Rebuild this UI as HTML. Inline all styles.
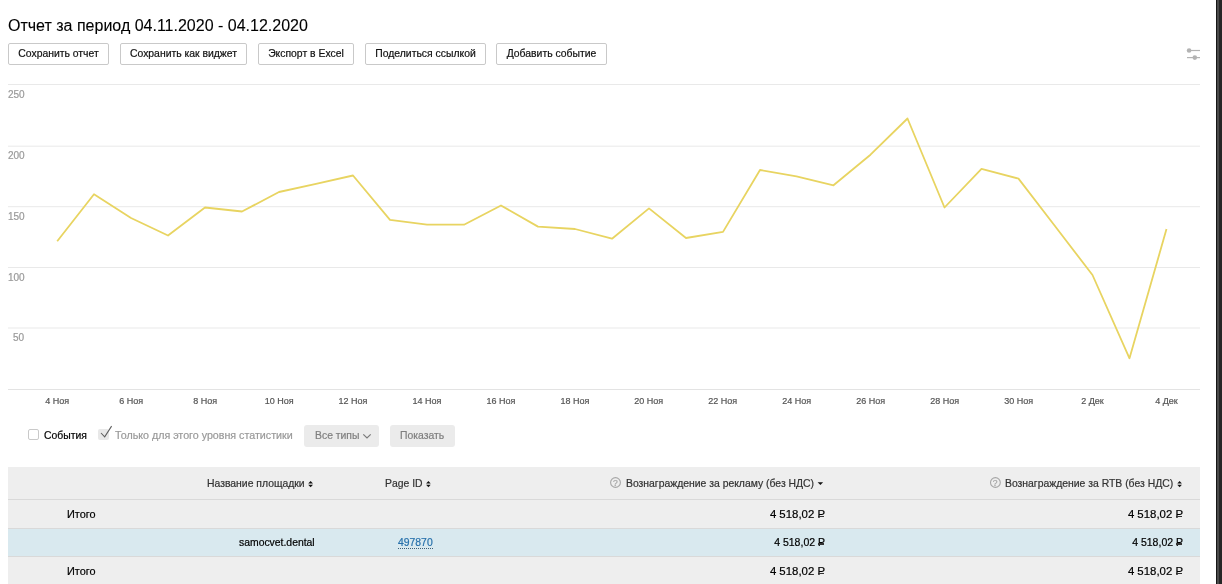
<!DOCTYPE html>
<html><head><meta charset="utf-8">
<style>
*{box-sizing:border-box;margin:0;padding:0}
html,body{width:1222px;height:584px;overflow:hidden;background:#fff}
body{position:relative;font-family:"Liberation Sans",sans-serif;color:#000}
.a{position:absolute;white-space:nowrap}
.t,.btn,.xlab,.ylab{-webkit-text-stroke:0.2px currentColor}
.title{-webkit-text-stroke:0.1px currentColor}
.title{left:8px;top:16px;font-size:16px;line-height:20px;color:#000}
.btn{position:absolute;top:43px;height:22px;border:1px solid #c9c9c9;border-radius:2px;background:#fff;font-size:10.4px;line-height:20px;text-align:center;color:#111}
.ylab{position:absolute;left:8px;font-size:10px;line-height:12px;color:#999}
.xlab{position:absolute;top:396px;font-size:9px;line-height:11px;color:#555;transform:translateX(-50%)}
.rbar{position:absolute;left:1216px;top:0;width:6px;height:584px;background:linear-gradient(to right,#161616 0,#161616 1px,#4a4a4a 1px,#4a4a4a 3.3px,#262626 3.3px)}
.tbl{position:absolute;left:8px;top:467px;width:1192px;height:117px;background:#eeeeee}
.hl{position:absolute;left:0;width:1192px;height:1px;background:#d9d9d9}
.t{position:absolute;font-size:10.4px;line-height:12px;white-space:nowrap;color:#000}
.rub{position:relative;display:inline-block}
.rub:after{content:"";position:absolute;left:0.02em;width:0.58em;top:0.69em;height:1.3px;background:#333}
</style></head>
<body>
<div style="position:absolute;left:0;top:0;width:1222px;height:584px;will-change:transform">
<div class="a title">Отчет за период 04.11.2020 - 04.12.2020</div>

<div class="btn" style="left:8px;width:101px">Сохранить отчет</div>
<div class="btn" style="left:120px;width:127px">Сохранить как виджет</div>
<div class="btn" style="left:258px;width:96px">Экспорт в Excel</div>
<div class="btn" style="left:365px;width:121px">Поделиться ссылкой</div>
<div class="btn" style="left:496px;width:111px">Добавить событие</div>

<svg class="a" style="left:0;top:0" width="1222" height="584" viewBox="0 0 1222 584">
  <g stroke="#b3b3b3" fill="#b3b3b3" stroke-width="1.2">
    <line x1="1187" y1="50.5" x2="1200" y2="50.5"/>
    <circle cx="1189.1" cy="50.5" r="2.3" stroke="none"/>
    <line x1="1187" y1="57.6" x2="1200" y2="57.6"/>
    <circle cx="1194.8" cy="57.6" r="2.3" stroke="none"/>
  </g>
  <g stroke="#e9e9e9" stroke-width="1">
    <line x1="8" y1="84.5" x2="1200" y2="84.5"/>
    <line x1="8" y1="146.2" x2="1200" y2="146.2"/>
    <line x1="8" y1="206.7" x2="1200" y2="206.7"/>
    <line x1="8" y1="267.5" x2="1200" y2="267.5"/>
    <line x1="8" y1="328" x2="1200" y2="328"/>
    <line x1="8" y1="389.5" x2="1200" y2="389.5" stroke="#e3e3e3"/>
  </g>
  <polyline fill="none" stroke="#e8d461" stroke-width="1.8" stroke-linejoin="round" points="57.2,241.2 94,194.3 131,218 168,235.5 205,207.5 242,211.5 279,192 316,183.8 353,175.5 390,219.8 427,224.7 464,224.7 501,205.5 538,226.6 575,229 612,238.7 649,208.4 686,238 723,231.9 760,170 796.5,176.3 833.5,185.3 870.5,154.7 907.5,118.5 944.5,207.5 981.5,168.8 1018.5,178.6 1055.5,226.8 1092.5,275 1129.5,358.3 1166.5,229.1"/>
</svg>

<div class="ylab" style="top:89px">250</div>
<div class="ylab" style="top:150px">200</div>
<div class="ylab" style="top:211px">150</div>
<div class="ylab" style="top:272px">100</div>
<div class="ylab" style="top:332px;left:13px">50</div>

<div class="xlab" style="left:57.2px">4 Ноя</div>
<div class="xlab" style="left:131.2px">6 Ноя</div>
<div class="xlab" style="left:205.1px">8 Ноя</div>
<div class="xlab" style="left:279.1px">10 Ноя</div>
<div class="xlab" style="left:353px">12 Ноя</div>
<div class="xlab" style="left:427px">14 Ноя</div>
<div class="xlab" style="left:500.9px">16 Ноя</div>
<div class="xlab" style="left:574.9px">18 Ноя</div>
<div class="xlab" style="left:648.8px">20 Ноя</div>
<div class="xlab" style="left:722.8px">22 Ноя</div>
<div class="xlab" style="left:796.7px">24 Ноя</div>
<div class="xlab" style="left:870.7px">26 Ноя</div>
<div class="xlab" style="left:944.6px">28 Ноя</div>
<div class="xlab" style="left:1018.6px">30 Ноя</div>
<div class="xlab" style="left:1092.5px">2 Дек</div>
<div class="xlab" style="left:1166.5px">4 Дек</div>


<div class="cb1" style="position:absolute;left:28px;top:429px;width:11px;height:11px;border:1px solid #c9c9c9;border-radius:2px;background:#fff"></div>
<div class="t" style="left:44px;top:430px;font-size:10.4px;color:#000">События</div>
<div style="position:absolute;left:98px;top:429px;width:11px;height:11px;border-radius:2px;background:#e8e8e8"></div>
<svg class="a" style="left:0;top:0;overflow:visible" width="1" height="1"><polyline points="101,433 104.7,436.8 111.6,426.1" fill="none" stroke="#5e5e5e" stroke-width="1.05"/></svg>
<div class="t" style="left:115px;top:429px;font-size:10.7px;color:#999">Только для этого уровня статистики</div>
<div style="position:absolute;left:304px;top:425px;width:75px;height:22px;border-radius:3px;background:#ebebeb"></div>
<div class="t" style="left:315px;top:430px;font-size:10.4px;color:#7f7f7f">Все типы</div>
<svg class="a" style="left:0;top:0;overflow:visible" width="1" height="1"><polyline points="363.3,434.4 367,438 370.7,434.4" fill="none" stroke="#7a7a7a" stroke-width="1.2"/></svg>
<div style="position:absolute;left:390px;top:425px;width:65px;height:22px;border-radius:3px;background:#ebebeb"></div>
<div class="t" style="left:400px;top:430px;font-size:10.4px;color:#7f7f7f">Показать</div>

<div class="tbl"></div>
<div class="hl" style="left:8px;top:499px"></div>
<div class="hl" style="left:8px;top:528px"></div>
<div style="position:absolute;left:8px;top:529px;width:1192px;height:27px;background:#d9e9ef"></div>
<div class="hl" style="left:8px;top:556px"></div>

<div class="t" style="left:207px;top:478px;color:#333">Название площадки</div>
<div class="t" style="left:385px;top:478px;color:#333">Page ID</div>
<div class="t" style="left:626px;top:478px;color:#333">Вознаграждение за рекламу (без НДС)</div>
<div class="t" style="left:1005px;top:478px;color:#333">Вознаграждение за RTB (без НДС)</div>


<svg class="a" style="left:0;top:0;overflow:visible" width="1" height="1">
  <g fill="#111">
    <path d="M308.2,483.6 L310.6,481 L313,483.6 Z"/><path d="M308.2,484.8 L310.6,487.2 L313,484.8 Z"/>
    <path d="M426.1,483.6 L428.4,481 L430.7,483.6 Z"/><path d="M426.1,484.8 L428.4,487.2 L430.7,484.8 Z"/>
    <path d="M817.6,482.3 L823.1,482.3 L820.35,485 Z"/>
    <path d="M1177.3,483.6 L1179.6,481 L1181.9,483.6 Z"/><path d="M1177.3,484.8 L1179.6,487.2 L1181.9,484.8 Z"/>
  </g>
  <g fill="none" stroke="#a6a6a6" stroke-width="1.1">
    <circle cx="615.5" cy="482.5" r="4.9"/>
    <circle cx="995.4" cy="482.5" r="4.9"/>
  </g>
</svg>
<div class="t" style="left:612.9px;top:477.9px;font-size:8.5px;line-height:10px;color:#a3a3a3">?</div>
<div class="t" style="left:992.8px;top:477.9px;font-size:8.5px;line-height:10px;color:#a3a3a3">?</div>
<div class="t" style="left:67px;top:508px;font-size:10.9px">Итого</div>
<div class="t" style="right:397px;top:508px;font-size:11.4px">4 518,02 <span class="rub">Р</span></div>
<div class="t" style="right:39px;top:508px;font-size:11.4px">4 518,02 <span class="rub">Р</span></div>

<div class="t" style="left:239px;top:537px">samocvet.dental</div>
<div class="t" style="left:398px;top:537px;color:#2670ab">497870</div>
<div style="position:absolute;left:398px;top:548px;width:35px;height:1px;background:repeating-linear-gradient(to right,#3d5f78 0,#3d5f78 1px,transparent 1px,transparent 2px)"></div>
<div class="t" style="right:397px;top:536px;font-size:10.5px">4 518,02 <span class="rub">Р</span></div>
<div class="t" style="right:39px;top:536px;font-size:10.5px">4 518,02 <span class="rub">Р</span></div>

<div class="t" style="left:67px;top:565px;font-size:10.9px">Итого</div>
<div class="t" style="right:397px;top:565px;font-size:11.4px">4 518,02 <span class="rub">Р</span></div>
<div class="t" style="right:39px;top:565px;font-size:11.4px">4 518,02 <span class="rub">Р</span></div>

<div class="rbar"></div>
</div>
</body></html>
